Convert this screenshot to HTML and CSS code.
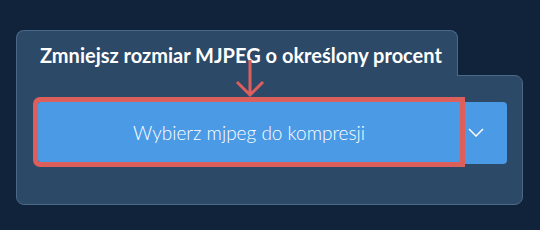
FILE: index.html
```html
<!doctype html>
<html lang="pl">
<head>
	<meta charset="UTF-8">
	<title>Kompresja MJPEG</title>
	<link rel="stylesheet" href="styles.css">
</head>
<body>
	<div class="card">
		<div class="card-tab">
			<h1>Zmniejsz rozmiar MJPEG o określony procent</h1>
		</div>
		<div class="card-body">
			<div class="btn-group">
				<button class="btn-main" type="button">Wybierz mjpeg do kompresji</button>
				<button class="btn-toggle" type="button">
					<svg width="16" height="9" viewBox="0 0 16 9"><path d="M1 1l7 7 7-7" fill="none" stroke="#fff" stroke-width="1.5"/></svg>
				</button>
				<!-- strzałka podpowiedzi -->
				<svg class="hint-arrow" width="30" height="38" viewBox="0 0 30 38"><path d="M15 0v35M2 22l13 13 13-13" fill="none" stroke="#dd5f5c" stroke-width="3"/></svg>
			</div>
		</div>
	</div>
</body>
</html>
```

FILE: styles.css
```css
html,
body{
	height: 100%;
}
body{
	margin: 0;
	padding: 30px 16px 0;
	background: #11233a;
	font-family: Lato, "Liberation Sans", sans-serif;
	color: #fff;
	box-sizing: border-box;
}
.card{
	width: 507px;
}
.card-tab{
	position: relative;
	width: 442px;
	height: 46px;
	margin-bottom: -1px;
	padding: 0 0 0 23px;
	box-sizing: border-box;
	background: #2c4967;
	border: 1px solid #4b6888;
	border-bottom: 0;
	border-radius: 8px 8px 0 0;
	z-index: 1;
}
.card-tab h1{
	margin: 0;
	padding-top: 12px;
	font-size: 20px;
	font-weight: 700;
	line-height: 24px;
}
.card-body{
	height: 130px;
	padding: 26px 15px 0 21px;
	box-sizing: border-box;
	background: #2c4967;
	border: 1px solid #4b6888;
	border-radius: 0 8px 8px 8px;
}
.btn-group{
	position: relative;
	display: flex;
	align-items: flex-start;
}
.btn-main,
.btn-toggle{
	margin: 0;
	border: 0;
	background: #4a9ae6;
	color: #fff;
	font-family: inherit;
}
.btn-main{
	position: relative;
	z-index: 1;
	width: 424px;
	height: 60px;
	font-size: 19px;
	font-weight: 300;
	border-radius: 2px 0 0 2px;
	outline: 5px solid #dd5f5c;
}
.btn-toggle{
	display: flex;
	align-items: center;
	justify-content: center;
	width: 47px;
	height: 62px;
	padding: 0 15px 2px 0;
	border-radius: 0 4px 4px 0;
}
.hint-arrow{
	position: absolute;
	left: 197px;
	top: -42px;
	z-index: 2;
}
```
